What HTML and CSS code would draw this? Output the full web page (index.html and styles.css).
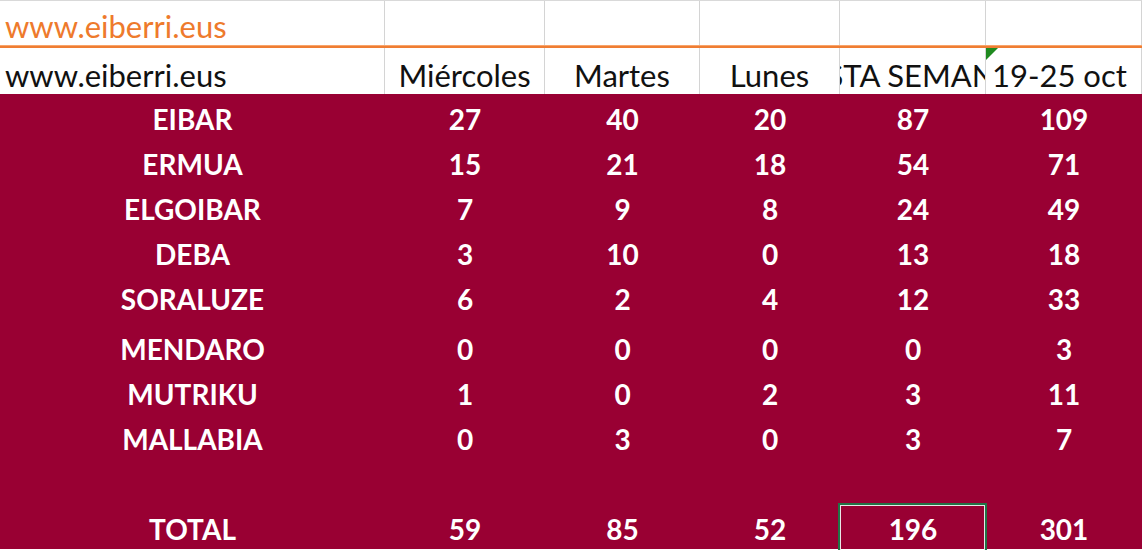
FILE: index.html
```html
<!DOCTYPE html>
<html lang="es">
<head>
<meta charset="utf-8">
<title>eiberri</title>
<link rel="stylesheet" href="styles.css">
</head>
<body>
<div class="sheet">
  <div class="row top">
    <div class="cell left orange">www.eiberri.eus</div>
    <div class="cell"></div>
    <div class="cell"></div>
    <div class="cell"></div>
    <div class="cell"></div>
    <div class="cell"></div>
  </div>
  <div class="sep"></div>
  <div class="row head">
    <div class="cell left">www.eiberri.eus</div>
    <div class="cell">Miércoles</div>
    <div class="cell">Martes</div>
    <div class="cell">Lunes</div>
    <div class="cell clip"><span>ESTA SEMANA</span></div>
    <div class="cell left note">19-25 oct</div>
  </div>
  <div class="body">
    <div class="row data"><div class="cell">EIBAR</div><div class="cell">27</div><div class="cell">40</div><div class="cell">20</div><div class="cell">87</div><div class="cell">109</div></div>
    <div class="row data"><div class="cell">ERMUA</div><div class="cell">15</div><div class="cell">21</div><div class="cell">18</div><div class="cell">54</div><div class="cell">71</div></div>
    <div class="row data"><div class="cell">ELGOIBAR</div><div class="cell">7</div><div class="cell">9</div><div class="cell">8</div><div class="cell">24</div><div class="cell">49</div></div>
    <div class="row data"><div class="cell">DEBA</div><div class="cell">3</div><div class="cell">10</div><div class="cell">0</div><div class="cell">13</div><div class="cell">18</div></div>
    <div class="row data"><div class="cell">SORALUZE</div><div class="cell">6</div><div class="cell">2</div><div class="cell">4</div><div class="cell">12</div><div class="cell">33</div></div>
    <div class="row data tall"><div class="cell">MENDARO</div><div class="cell">0</div><div class="cell">0</div><div class="cell">0</div><div class="cell">0</div><div class="cell">3</div></div>
    <div class="row data"><div class="cell">MUTRIKU</div><div class="cell">1</div><div class="cell">0</div><div class="cell">2</div><div class="cell">3</div><div class="cell">11</div></div>
    <div class="row data"><div class="cell">MALLABIA</div><div class="cell">0</div><div class="cell">3</div><div class="cell">0</div><div class="cell">3</div><div class="cell">7</div></div>
    <div class="row data"><div class="cell"></div><div class="cell"></div><div class="cell"></div><div class="cell"></div><div class="cell"></div><div class="cell"></div></div>
    <div class="row data"><div class="cell">TOTAL</div><div class="cell">59</div><div class="cell">85</div><div class="cell">52</div><div class="cell selected">196</div><div class="cell">301</div></div>
  </div>
</div>
</body>
</html>
```

FILE: styles.css
```css
html, body {
  margin: 0;
  padding: 0;
  background: #ffffff;
}
body {
  width: 1142px;
  height: 550px;
  overflow: hidden;
  font-family: Lato, "Open Sans", "Liberation Sans", sans-serif;
}
.sheet {
  width: 1142px;
}
.row {
  display: grid;
  grid-template-columns: 385px 160px 155px 140px 146px 156px;
}
.cell {
  display: flex;
  align-items: flex-end;
  justify-content: center;
  box-sizing: border-box;
  white-space: nowrap;
  line-height: 1;
  position: relative;
}
.cell.left {
  justify-content: flex-start;
  padding-left: 5px;
}
.top {
  height: 45px;
  border-top: 1px solid #d9d9d9;
  box-sizing: border-box;
}
.top .cell,
.head .cell {
  border-right: 1px solid #d4d4d4;
  font-size: 31px;
  color: #111111;
  padding-bottom: 3px;
}
.top .cell.orange {
  color: #ee7a2c;
}
.sep {
  height: 3px;
  background: linear-gradient(#f8a46a 0, #f8a46a 1px, #ef7d33 1px, #ef7d33 3px);
}
.head {
  height: 46px;
}
.head .cell.clip {
  overflow: hidden;
}
.head .cell.clip span {
  flex: none;
}
.head .cell.note {
  padding-left: 6px;
}
.note::before {
  content: "";
  position: absolute;
  left: 0;
  top: 0;
  border-top: 12px solid #1f8a1f;
  border-right: 12px solid transparent;
}
.body {
  background: #990033;
}
.data {
  height: 45px;
}
.data.tall {
  height: 50px;
}
.data .cell {
  color: #ffffff;
  font-weight: 700;
  font-size: 28px;
  padding-bottom: 6px;
}
.selected::after {
  content: "";
  position: absolute;
  left: -2px;
  top: -1px;
  right: -1px;
  bottom: -6px;
  border: 2px solid #217346;
  box-shadow: inset 0 0 0 1px #e8e8e8;
}
```
